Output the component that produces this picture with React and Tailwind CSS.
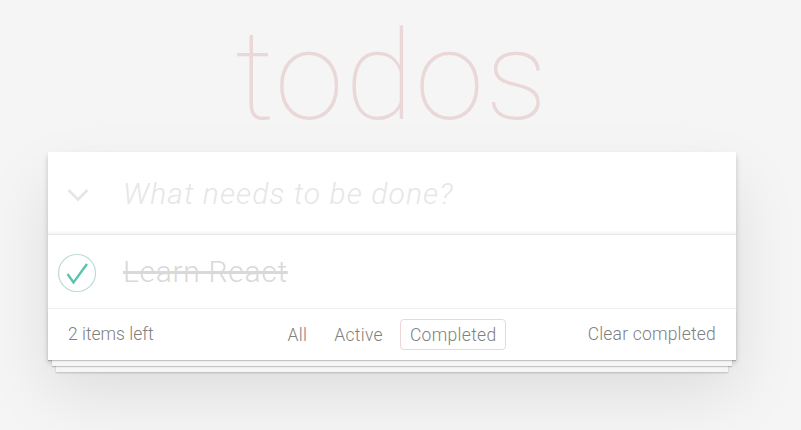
import { useState } from 'react';

const font = { fontFamily: 'Roboto, "Liberation Sans", Arial, sans-serif' };

function Check({ done }) {
  return (
    <svg width="50" height="50" viewBox="0 0 50 50" className="shrink-0">
      <circle cx="25" cy="25" r="18.5" fill="none" stroke={done ? '#bddad5' : '#ededed'} strokeWidth="1.2" />
      {done && (
        <polyline points="15.5,26 21.5,34.5 35,16" fill="none" stroke="#5dc2af" strokeWidth="2.4" strokeLinejoin="miter" />
      )}
    </svg>
  );
}

export default function App() {
  const [filter, setFilter] = useState('Completed');
  const todos = [{ id: 1, title: 'Learn React', done: true }];

  return (
    <div className="min-h-screen w-full bg-[#f5f5f5]" style={font}>
      <div className="w-[784px] min-h-[430px] flex flex-col items-center">
        {/* title */}
        <h1 className="pt-[14px] h-[152px] text-[125px] leading-[125px] font-thin tracking-[1.5px] text-[#ead7d7] text-center">
          todos
        </h1>

        {/* card */}
        <section className="w-[688px] bg-white shadow-[0_2.5px_5px_rgba(0,0,0,0.2),0_31px_62px_rgba(0,0,0,0.1)]">
          <div className="h-[82px] flex items-center shadow-[inset_0_-2.5px_1px_rgba(0,0,0,0.03)]">
            <div className="w-[75px] flex justify-center pr-[16px] pt-[4px]">
              <svg width="24" height="16" viewBox="0 0 24 16">
                <polyline points="2.5,3 12,12.5 21.5,3" fill="none" stroke="#e6e6e6" strokeWidth="2.8" />
              </svg>
            </div>
            <input
              className="flex-1 h-full pr-[20px] text-[30px] font-light italic tracking-[1.1px] text-[#4d4d4d] placeholder:text-[#e6e6e6] bg-transparent outline-none"
              placeholder="What needs to be done?"
              style={font}
            />
          </div>

          <ul className="border-t border-[#e6e6e6]">
            {todos.map(t => (
              <li key={t.id} className="h-[74px] flex items-center border-b border-[#ededed]">
                <div className="w-[75px] flex justify-start pl-[4px] pt-[2px]">
                  <Check done={t.done} />
                </div>
                <span className="text-[30px] leading-[36px] font-light tracking-[0.7px] text-[#d9d9d9] line-through">
                  {t.title}
                </span>
              </li>
            ))}
          </ul>

          <footer className="relative h-[51px] px-[20px] grid grid-cols-[1fr_auto_1fr] items-center text-[17.5px] font-light text-[#808080] before:content-[''] before:absolute before:inset-x-0 before:bottom-0 before:h-[50px] before:shadow-[0_1px_1px_rgba(0,0,0,0.2),0_10px_0_-4px_#f6f6f6,0_11px_1px_-4px_rgba(0,0,0,0.2),0_20px_0_-8px_#f6f6f6,0_21px_2px_-8px_rgba(0,0,0,0.2)]">
            <span className="relative z-10">2 items left</span>
            <div className="relative z-10 flex items-center">
              {['All', 'Active', 'Completed'].map(f => (
                <button
                  key={f}
                  onClick={() => setFilter(f)}
                  className={
                    'mx-[3.75px] px-[8.75px] py-[3.5px] rounded-[3.75px] border leading-[22px] tracking-[0.3px] ' +
                    (filter === f ? 'border-[#efd5d5]' : 'border-transparent')
                  }
                  style={font}
                >
                  {f}
                </button>
              ))}
            </div>
            <button className="relative z-10 justify-self-end tracking-[0.2px]" style={font}>Clear completed</button>
          </footer>
        </section>
      </div>
    </div>
  );
}
